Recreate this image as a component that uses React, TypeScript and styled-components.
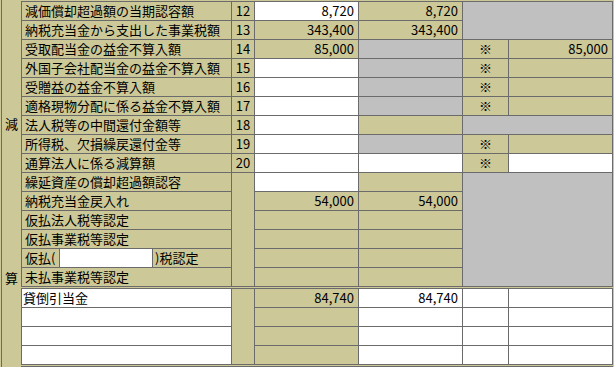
import React from 'react';
import styled, { createGlobalStyle, css } from 'styled-components';

const KHAKI = '#ccc898';
const GRAY = '#c0c0c0';
const WHITE = '#ffffff';
const LINE = '#6b6b6b';

type Tone = 'k' | 'w' | 'g';
type Align = 'left' | 'center' | 'right';

const toneColor: Record<Tone, string> = { k: KHAKI, w: WHITE, g: GRAY };

const GlobalStyle = createGlobalStyle`
    html, body {
        margin: 0;
        padding: 0;
        overflow: hidden;
        background: ${KHAKI};
        font-family: "Noto Sans CJK JP", "Noto Sans", sans-serif;
        font-size: 13px;
        color: #000;
    }
`;

const Page = styled.div`
    display: flex;
    height: 100vh;
`;

const SideLabel = styled.div`
    width: 19px;
    margin-left: 1px;
    border-left: 1px solid ${LINE};
    display: flex;
    flex-direction: column;
    align-items: center;
    gap: 139px;
    padding-top: 116px;
    line-height: 15px;
`;

const Sections = styled.div`
    display: flex;
    flex-direction: column;
    gap: 1px;
    padding-top: 1px;
`;

const Sheet = styled.div`
    display: grid;
    grid-template-columns: 209px 22px 103px 103px 45px 103px;
    grid-auto-rows: 18px;
    gap: 1px;
    padding: 1px;
    background: ${LINE};
    width: max-content;
`;

const NextEdge = styled.div`
    height: 12px;
    border-top: 1px solid ${LINE};
`;

const Cell = styled.div<{ $tone: Tone; $align?: Align; $rows?: number; $cols?: number }>`
    background: ${({ $tone }) => toneColor[$tone]};
    text-align: ${({ $align }) => $align ?? 'right'};
    line-height: 18px;
    white-space: nowrap;
    overflow: hidden;
    padding: ${({ $align }) => $align === 'center' ? '0' : '0 4px 0 3px'};
    ${({ $rows }) => $rows && css`grid-row: span ${$rows};`}
    ${({ $cols }) => $cols && css`grid-column: span ${$cols};`}
`;

const LabelCell = styled.div<{ $tone?: Tone; $inset?: number }>`
    background: ${({ $tone }) => toneColor[$tone ?? 'k']};
    display: flex;
    align-items: stretch;
    line-height: 18px;
    white-space: nowrap;
    overflow: hidden;
    padding-left: ${({ $inset }) => $inset ?? 3}px;
`;

const Prefix = styled.span`
    width: 34px;
`;

const InlineInput = styled.input`
    box-sizing: border-box;
    width: 94px;
    height: 18px;
    margin: 0 2px 0 0;
    padding: 0 2px;
    border: none;
    border-left: 1px solid ${LINE};
    border-right: 1px solid ${LINE};
    background: ${WHITE};
    font: inherit;
    outline: none;
`;

interface Field {
    t: Tone;
    v?: string;
    align?: Align;
    rows?: number;
    cols?: number;
}

interface RowDef {
    label: string;
    no?: string;
    noRows?: number;
    fields: Field[];
}

const mark = (t: Tone = 'k'): Field => ({ t, v: '※', align: 'center' });

const upperRows: RowDef[] = [
    { label: '減価償却超過額の当期認容額', no: '12', fields: [{ t: 'w', v: '8,720' }, { t: 'k', v: '8,720' }, { t: 'g', cols: 2, rows: 2 }] },
    { label: '納税充当金から支出した事業税額', no: '13', fields: [{ t: 'k', v: '343,400' }, { t: 'k', v: '343,400' }] },
    { label: '受取配当金の益金不算入額', no: '14', fields: [{ t: 'k', v: '85,000' }, { t: 'g' }, mark(), { t: 'k', v: '85,000' }] },
    { label: '外国子会社配当金の益金不算入額', no: '15', fields: [{ t: 'w' }, { t: 'g' }, mark(), { t: 'k' }] },
    { label: '受贈益の益金不算入額', no: '16', fields: [{ t: 'w' }, { t: 'g' }, mark(), { t: 'k' }] },
    { label: '適格現物分配に係る益金不算入額', no: '17', fields: [{ t: 'w' }, { t: 'g' }, mark(), { t: 'k' }] },
    { label: '法人税等の中間還付金額等', no: '18', fields: [{ t: 'w' }, { t: 'k' }, { t: 'g', cols: 2 }] },
    { label: '所得税、欠損繰戻還付金等', no: '19', fields: [{ t: 'w' }, { t: 'g' }, mark(), { t: 'k' }] },
    { label: '通算法人に係る減算額', no: '20', fields: [{ t: 'w' }, { t: 'w' }, mark(), { t: 'w' }] },
    { label: '繰延資産の償却超過額認容', noRows: 6, fields: [{ t: 'w' }, { t: 'k' }, { t: 'g', cols: 2, rows: 6 }] },
    { label: '納税充当金戻入れ', fields: [{ t: 'k', v: '54,000' }, { t: 'k', v: '54,000' }] },
    { label: '仮払法人税等認定', fields: [{ t: 'k' }, { t: 'k' }] },
    { label: '仮払事業税等認定', fields: [{ t: 'k' }, { t: 'k' }] },
    { label: '仮払()税認定', fields: [{ t: 'k' }, { t: 'k' }] },
    { label: '未払事業税等認定', fields: [{ t: 'k' }, { t: 'k' }] },
];

const lowerRows: RowDef[] = [
    { label: '貸倒引当金', noRows: 4, fields: [{ t: 'k', v: '84,740' }, { t: 'w', v: '84,740' }, { t: 'w' }, { t: 'w' }] },
    { label: '', fields: [{ t: 'k' }, { t: 'w' }, { t: 'w' }, { t: 'w' }] },
    { label: '', fields: [{ t: 'k' }, { t: 'w' }, { t: 'w' }, { t: 'w' }] },
    { label: '', fields: [{ t: 'k' }, { t: 'w' }, { t: 'w' }, { t: 'w' }] },
];

const NoCell = ({ row }: { row: RowDef }) => {
    if (row.no) return <Cell $tone='k' $align='center'>{row.no}</Cell>;
    if (row.noRows) return <Cell $tone='k' $rows={row.noRows} />;
    return null;
};

const Fields = ({ fields }: { fields: Field[] }) => (
    <>
        {fields.map((f, i) => (
            <Cell key={i} $tone={f.t} $align={f.align} $rows={f.rows} $cols={f.cols}>{f.v}</Cell>
        ))}
    </>
);

const UpperLabel = ({ label }: { label: string }) => {
    if (label === '仮払()税認定') {
        return (
            <LabelCell>
                <Prefix>仮払(</Prefix>
                <InlineInput readOnly value='' />
                <span>)税認定</span>
            </LabelCell>
        );
    }
    return <LabelCell>{label}</LabelCell>;
};

export default function App() {
    return (
        <>
            <GlobalStyle />
            <Page>
                <SideLabel>
                    <span>減</span>
                    <span>算</span>
                </SideLabel>
                <Sections>
                    <Sheet>
                        {upperRows.map(row => (
                            <React.Fragment key={row.label}>
                                <UpperLabel label={row.label} />
                                <NoCell row={row} />
                                <Fields fields={row.fields} />
                            </React.Fragment>
                        ))}
                    </Sheet>
                    <Sheet>
                        {lowerRows.map((row, i) => (
                            <React.Fragment key={i}>
                                <LabelCell $tone='w' $inset={1}>{row.label}</LabelCell>
                                <NoCell row={row} />
                                <Fields fields={row.fields} />
                            </React.Fragment>
                        ))}
                    </Sheet>
                    <NextEdge />
                </Sections>
            </Page>
        </>
    );
}
